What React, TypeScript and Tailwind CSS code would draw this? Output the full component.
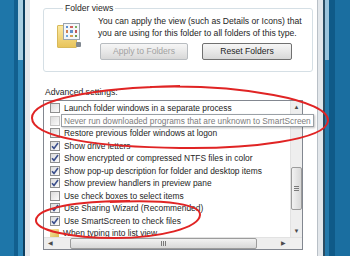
import React from "react";

const font = { fontFamily: '"Liberation Sans", Arial, sans-serif' };

type Row = { label: string; state: "on" | "off" | "disabled" | "group" };

const rows: Row[] = [
  { label: "Launch folder windows in a separate process", state: "off" },
  { label: "Never run downloaded programs that are unknown to SmartScreen", state: "disabled" },
  { label: "Restore previous folder windows at logon", state: "off" },
  { label: "Show drive letters", state: "on" },
  { label: "Show encrypted or compressed NTFS files in color", state: "on" },
  { label: "Show pop-up description for folder and desktop items", state: "on" },
  { label: "Show preview handlers in preview pane", state: "on" },
  { label: "Use check boxes to select items", state: "off" },
  { label: "Use Sharing Wizard (Recommended)", state: "on" },
  { label: "Use SmartScreen to check files", state: "on" },
  { label: "When typing into list view", state: "group" },
];

const Box = ({ state }: { state: Row["state"] }) => {
  if (state === "group") {
    return <div className="w-[9px] h-[9px] shrink-0 rounded-[1px] bg-gradient-to-br from-[#f6e7a4] to-[#d9b94a]" />;
  }
  return (
    <div
      className={`w-[10px] h-[10px] shrink-0 border ${
        state === "disabled" ? "border-[#c4c4c4]" : "border-[#8e8f8f]"
      } bg-gradient-to-br from-[#dcdcdc] to-[#fbfbfb] flex items-center justify-center`}
    >
      {state === "on" && (
        <svg width="8" height="8" viewBox="0 0 8 8">
          <path d="M1 4.2 L3 6.4 L7 1" fill="none" stroke="#3b4f8c" strokeWidth="1.6" />
        </svg>
      )}
    </div>
  );
};

const Btn = ({ children, disabled }: { children: React.ReactNode; disabled?: boolean }) => (
  <div
    className={`h-[17px] rounded-[2px] border flex items-center justify-center text-[8.6px] bg-gradient-to-b from-[#f6f6f6] via-[#e8e8e8] to-[#d8d8d8] ${
      disabled ? "border-[#b8bcc0] text-[#a2a2a2] w-[88px]" : "border-[#707070] text-[#1e1e1e] w-[90px]"
    }`}
  >
    {children}
  </div>
);

export default function App() {
  return (
    <div className="relative w-[350px] h-[256px] overflow-hidden flex bg-[#1a6ea0]" style={font}>
      {/* left desktop edge */}
      <div className="w-[14px] bg-[#1e76a9]" />
      <div className="w-[4px] bg-[#115f8f]" />
      <div className="w-[5px] flex flex-col">
        <div className="h-[60px] bg-[#a9cfe2]" />
        <div className="flex-1 bg-[#2a84b6]" />
      </div>
      <div className="w-[2px] bg-[#0d3e5e]" />
      <div className="w-[5px] bg-[#e3e7eb]" />

      {/* dialog content */}
      <div className="w-[287px] bg-white pl-[13px] pr-[14px] pt-[2px] text-[#1e1e1e]">
        <fieldset className="h-[70px] border border-[#d5dfe5] rounded-[3px] pl-[13px] pr-[10px]">
          <legend className="ml-[6px] px-[2px] text-[8.6px] leading-[12px]">Folder views</legend>
          <div className="flex gap-[17px]">
            <div className="mt-[9px] w-[24px] h-[25px] relative">
              <div className="absolute left-0 top-[2px] w-[20px] h-[23px] rounded-[1px] bg-gradient-to-b from-[#fbe9a0] to-[#e8c45a] border border-[#d8b95a]" />
              <div className="absolute left-[6px] top-0 w-[17px] h-[17px] bg-[#f4f6f8] border border-[#9aa4ae] grid grid-cols-3 gap-[2px] p-[2px]">
                <div className="bg-[#5b8fd0]" />
                <div className="bg-[#d06060]" />
                <div className="bg-[#7ab060]" />
                <div className="bg-[#d08050]" />
                <div className="bg-[#6090c8]" />
                <div className="bg-[#c05858]" />
                <div className="bg-[#70a8d8]" />
                <div className="bg-[#d8a050]" />
                <div className="bg-[#6a9a50]" />
              </div>
              <div className="absolute right-0 bottom-[1px] w-[5px] h-[5px] bg-[#808890] rounded-[1px]" />
            </div>
            <div className="pt-[1px]">
              <div className="text-[8.6px] leading-[12px] whitespace-nowrap">
                You can apply the view (such as Details or Icons) that
                <br />
                you are using for this folder to all folders of this type.
              </div>
              <div className="flex gap-[14px] ml-[2px] mt-[4px]">
                <Btn disabled>Apply to Folders</Btn>
                <Btn>Reset Folders</Btn>
              </div>
            </div>
          </div>
        </fieldset>

        <div className="mt-[14px] mb-[2px] ml-[2px] text-[8.6px] leading-[12px]">Advanced settings:</div>

        <div className="h-[150px] border border-[#828790] flex flex-col">
          <div className="flex flex-1 min-h-0">
            <div className="flex-1 min-w-0 pt-[1px]">
              {rows.map((r) =>
                r.state === "disabled" ? (
                  <div key={r.label} className="h-[12.5px] flex items-center pl-[6px] whitespace-nowrap">
                    <Box state={r.state} />
                    <span className="relative z-10 ml-[1px] h-[13px] pl-[2px] pr-[2px] bg-white border border-[#9aa0a6] shadow-[1px_1px_2px_rgba(0,0,0,0.25)] flex items-center text-[8.3px] text-[#7c7c7c]">
                      {r.label}
                    </span>
                  </div>
                ) : (
                  <div key={r.label} className="h-[12.5px] flex items-center gap-[4px] pl-[6px] whitespace-nowrap">
                    <Box state={r.state} />
                    <span className="text-[8.4px] leading-[12px] text-[#1e1e1e]">{r.label}</span>
                  </div>
                )
              )}
            </div>
            {/* vertical scrollbar */}
            <div className="w-[12px] bg-[#eeeeee] border-l border-[#e2e2e2] flex flex-col items-center">
              <div className="h-[12px] flex items-center justify-center text-[6px] text-[#4a4a4a]">▲</div>
              <div className="h-[54px]" />
              <div className="w-[11px] h-[43px] rounded-[2px] border border-[#9c9c9c] bg-gradient-to-r from-[#f2f2f2] to-[#d8d8d8] flex items-center justify-center">
                <div className="flex flex-col gap-[1px]">
                  <div className="w-[5px] h-[1px] bg-[#7a7a7a]" />
                  <div className="w-[5px] h-[1px] bg-[#7a7a7a]" />
                  <div className="w-[5px] h-[1px] bg-[#7a7a7a]" />
                </div>
              </div>
              <div className="flex-1" />
              <div className="h-[12px] flex items-center justify-center text-[6px] text-[#4a4a4a]">▼</div>
            </div>
          </div>
          {/* horizontal scrollbar */}
          <div className="h-[12px] flex bg-[#eeeeee] border-t border-[#e2e2e2]">
            <div className="w-[13px] flex items-center justify-center text-[6px] text-[#4a4a4a]">◀</div>
            <div className="w-[13px]" />
            <div className="w-[187px] h-[11px] rounded-[2px] border border-[#9c9c9c] bg-gradient-to-b from-[#f2f2f2] to-[#d8d8d8] flex items-center justify-center">
              <div className="flex gap-[1px]">
                <div className="w-[1px] h-[5px] bg-[#7a7a7a]" />
                <div className="w-[1px] h-[5px] bg-[#7a7a7a]" />
                <div className="w-[1px] h-[5px] bg-[#7a7a7a]" />
              </div>
            </div>
            <div className="flex-1" />
            <div className="w-[13px] flex items-center justify-center text-[6px] text-[#4a4a4a]">▶</div>
            <div className="w-[12px] bg-[#f0f0f0]" />
          </div>
        </div>
      </div>

      {/* right dialog edge */}
      <div className="w-[1px] bg-[#b9c0c7]" />
      <div className="w-[5px] bg-[#e3e7eb]" />
      <div className="w-[2px] bg-[#2b4d63]" />
      <div className="w-[4px] flex flex-col">
        <div className="h-[60px] bg-[#9cc4dc]" />
        <div className="flex-1 bg-[#2479aa]" />
      </div>
      <div className="w-[6px] bg-[#0f5a88]" />
      <div className="flex-1 bg-[#1a6ea0]" />

      {/* red annotation ellipses */}
      <svg className="absolute inset-0 pointer-events-none z-20" width="350" height="256" viewBox="0 0 350 256">
        <path
          d="M150 87 C240 84 330 100 328 121 C326 140 250 149 180 148 C100 147 32 138 32 118 C32 100 90 88 180 86"
          fill="none"
          stroke="#e02424"
          strokeWidth="2"
        />
        <path
          d="M110 202 C170 199 201 205 200 215 C199 228 160 238 115 238 C70 238 35 230 36 220 C37 208 75 201 130 201"
          fill="none"
          stroke="#e02424"
          strokeWidth="2"
        />
      </svg>
    </div>
  );
}
